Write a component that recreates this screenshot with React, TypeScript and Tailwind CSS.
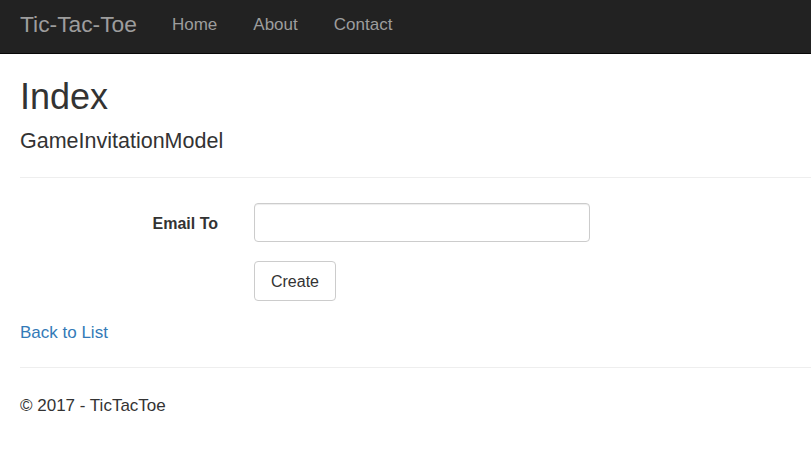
export default function App() {
  return (
    <div className="min-h-[472px] bg-white text-[17px] text-[#333] [font-family:Arial,'Liberation_Sans',sans-serif]">
      {/* Navbar */}
      <nav className="h-[54px] bg-[#222] border-b border-[#080808] flex items-center px-[20px] pb-[4px]">
        <a className="text-[22.8px] text-[#9d9d9d] leading-none">Tic-Tac-Toe</a>
        <ul className="flex items-center ml-[35px] gap-[36px] text-[17px] text-[#9d9d9d]">
          <li>Home</li>
          <li>About</li>
          <li>Contact</li>
        </ul>
      </nav>

      <div className="pl-[20px]">
        <h2 className="mt-[23px] text-[36px] leading-[1.1] font-normal">Index</h2>
        <h4 className="mt-[13px] text-[21.5px] leading-[1.1] font-normal">GameInvitationModel</h4>
        <hr className="mt-[24px] border-t border-[#eee]" />

        <form className="pt-[25px]">
          <div className="flex items-center">
            <label className="w-[198px] text-right font-bold text-[16px] pt-[2px]">Email To</label>
            <input
              type="text"
              className="ml-[36px] w-[336px] h-[39px] rounded-[4px] border border-[#ccc] px-[12px] shadow-[inset_0_1px_1px_rgba(0,0,0,0.075)] outline-none"
            />
          </div>
          <div className="mt-[19px] pl-[234px]">
            <button
              type="button"
              className="h-[40px] w-[82px] rounded-[4px] border border-[#ccc] bg-white text-[#333] text-[16px] pt-[2px]"
            >
              Create
            </button>
          </div>
        </form>

        <div className="mt-[21px] leading-[1.3]">
          <a className="text-[#337ab7]">Back to List</a>
        </div>
        <hr className="mt-[23px] border-t border-[#eee]" />
        <footer className="pt-[27px] leading-[1.3]">
          <p>© 2017 - TicTacToe</p>
        </footer>
      </div>
    </div>
  );
}
